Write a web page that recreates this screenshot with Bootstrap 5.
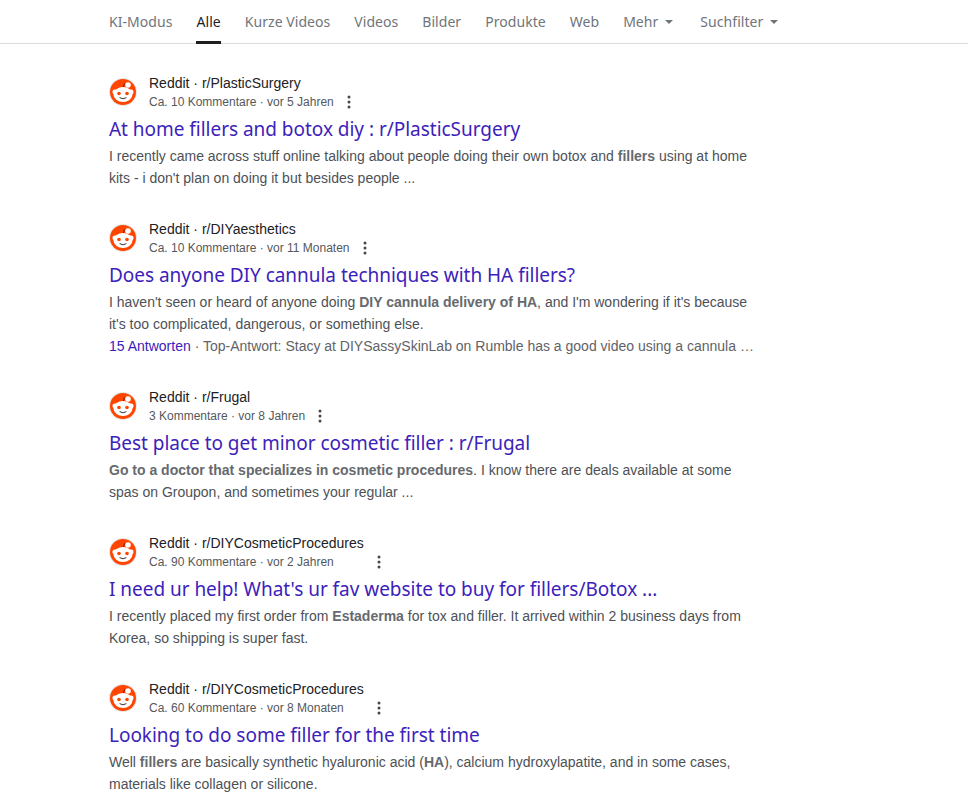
<!doctype html>
<html lang="de"><head><meta charset="utf-8"><title>Suche</title>
<link href="https://cdn.jsdelivr.net/npm/bootstrap@5.3.0/dist/css/bootstrap.min.css" rel="stylesheet">
<style>
body{background:#fff;font-family:"Liberation Sans",sans-serif;color:#4d5156;overflow:hidden}
.tabbar{height:44px;border-bottom:1px solid #dadce0;padding-left:109px;gap:24px;font-family:"Noto Sans",sans-serif}
.tabitem{font-size:14px;letter-spacing:.05px;line-height:44px;height:44px;color:#70757a;text-decoration:none;position:relative;display:flex;align-items:center}
.tabitem.on{color:#1f1f1f}
.tabitem.on::after{content:"";position:absolute;left:0;right:0;bottom:0;height:3px;background:#1f1f1f}
.tabitem.last{margin-left:3px}
.caret-down{width:0;height:0;border:4px solid transparent;border-top:4px solid #70757a;border-bottom:0;margin-left:7px}
.results{padding:29px 0 0 109px;width:660px}
.hit{margin-bottom:30px}
.hit-head{height:38px;gap:12px}
.logo-wrap{width:28px;height:28px;flex:none;display:block}
.site{font-size:14px;line-height:20px;color:#202124;height:20px}
.meta{font-size:12px;line-height:18px;color:#54585c;white-space:nowrap}
.dots{width:4px;height:14px;margin:0 0 2px 13px;flex:none;align-self:flex-end}
.hit-title{display:block;font-family:"Noto Sans",sans-serif;font-size:19px;letter-spacing:-.03px;line-height:26px;color:#3c22ba;text-decoration:none;margin-top:5px;margin-bottom:3px;white-space:nowrap}
.snip{font-size:14px;line-height:22px;color:#4d5156;white-space:nowrap}
.snip b{color:#666a6e}
.snip a{color:#3c22ba;text-decoration:none}
.snip span{color:#5f6368}
</style></head><body>
<nav class="tabbar d-flex">
<a class="tabitem" href="#">KI-Modus</a><a class="tabitem on" href="#">Alle</a><a class="tabitem" href="#">Kurze Videos</a><a class="tabitem" href="#">Videos</a><a class="tabitem" href="#">Bilder</a><a class="tabitem" href="#">Produkte</a><a class="tabitem" href="#">Web</a><a class="tabitem" href="#">Mehr<span class="caret-down"></span></a><a class="tabitem last" href="#">Suchfilter<span class="caret-down"></span></a>
</nav>
<svg width="0" height="0" class="d-block" aria-hidden="true"><defs>
<symbol id="snoo" viewBox="0 0 28 28"><circle cx="14" cy="14" r="14" fill="#e6e6e6"/><circle cx="14" cy="14" r="13" fill="#ff4500"/><path d="M14 10 L15.4 5.6 L19 7" stroke="#7a1d00" stroke-width="1" fill="none"/><circle cx="19" cy="7" r="2.8" fill="#fff"/><circle cx="5.8" cy="14" r="2.4" fill="#fff"/><circle cx="22.2" cy="14" r="2.4" fill="#fff"/><ellipse cx="14" cy="16.5" rx="9.5" ry="7.5" fill="#fff"/><circle cx="10" cy="15.5" r="1.8" fill="#ff4500"/><circle cx="18" cy="15.5" r="1.8" fill="#ff4500"/><path d="M10.6 19.6 Q14 22 17.4 19.6" stroke="#333" stroke-width="1" fill="none"/></symbol>
<symbol id="vdots" viewBox="0 0 4 14"><circle cx="2" cy="2" r="1.5" fill="#474747"/><circle cx="2" cy="7" r="1.5" fill="#474747"/><circle cx="2" cy="12" r="1.5" fill="#474747"/></symbol>
</defs></svg>
<main class="results">
<article class="hit"><div class="hit-head d-flex align-items-center"><svg class="logo-wrap"><use href="#snoo"/></svg><div class="d-flex"><div><div class="site">Reddit · r/PlasticSurgery</div><div class="meta">Ca. 10 Kommentare · vor 5 Jahren</div></div><svg class="dots"><use href="#vdots"/></svg></div></div>
<a class="hit-title" href="#">At home fillers and botox diy : r/PlasticSurgery</a>
<div class="snip">I recently came across stuff online talking about people doing their own botox and <b>fillers</b> using at home<br>kits - i don't plan on doing it but besides people ...</div></article>
<article class="hit"><div class="hit-head d-flex align-items-center"><svg class="logo-wrap"><use href="#snoo"/></svg><div class="d-flex"><div><div class="site">Reddit · r/DIYaesthetics</div><div class="meta">Ca. 10 Kommentare · vor 11 Monaten</div></div><svg class="dots"><use href="#vdots"/></svg></div></div>
<a class="hit-title" href="#">Does anyone DIY cannula techniques with HA fillers?</a>
<div class="snip">I haven't seen or heard of anyone doing <b>DIY cannula delivery of HA</b>, and I'm wondering if it's because<br>it's too complicated, dangerous, or something else.<br><a href="#">15 Antworten</a> <span>· Top-Antwort: Stacy at DIYSassySkinLab on Rumble has a good video using a cannula …</span></div></article>
<article class="hit"><div class="hit-head d-flex align-items-center"><svg class="logo-wrap"><use href="#snoo"/></svg><div class="d-flex"><div><div class="site">Reddit · r/Frugal</div><div class="meta">3 Kommentare · vor 8 Jahren</div></div><svg class="dots"><use href="#vdots"/></svg></div></div>
<a class="hit-title" href="#">Best place to get minor cosmetic filler : r/Frugal</a>
<div class="snip"><b>Go to a doctor that specializes in cosmetic procedures</b>. I know there are deals available at some<br>spas on Groupon, and sometimes your regular ...</div></article>
<article class="hit"><div class="hit-head d-flex align-items-center"><svg class="logo-wrap"><use href="#snoo"/></svg><div class="d-flex"><div><div class="site">Reddit · r/DIYCosmeticProcedures</div><div class="meta">Ca. 90 Kommentare · vor 2 Jahren</div></div><svg class="dots"><use href="#vdots"/></svg></div></div>
<a class="hit-title" href="#">I need ur help! What's ur fav website to buy for fillers/Botox ...</a>
<div class="snip">I recently placed my first order from <b>Estaderma</b> for tox and filler. It arrived within 2 business days from<br>Korea, so shipping is super fast.</div></article>
<article class="hit"><div class="hit-head d-flex align-items-center"><svg class="logo-wrap"><use href="#snoo"/></svg><div class="d-flex"><div><div class="site">Reddit · r/DIYCosmeticProcedures</div><div class="meta">Ca. 60 Kommentare · vor 8 Monaten</div></div><svg class="dots"><use href="#vdots"/></svg></div></div>
<a class="hit-title" href="#">Looking to do some filler for the first time</a>
<div class="snip">Well <b>fillers</b> are basically synthetic hyaluronic acid (<b>HA</b>), calcium hydroxylapatite, and in some cases,<br>materials like collagen or silicone.</div></article>
</main>
<script src="https://cdn.jsdelivr.net/npm/bootstrap@5.3.0/dist/js/bootstrap.bundle.min.js"></script>
</body></html>
